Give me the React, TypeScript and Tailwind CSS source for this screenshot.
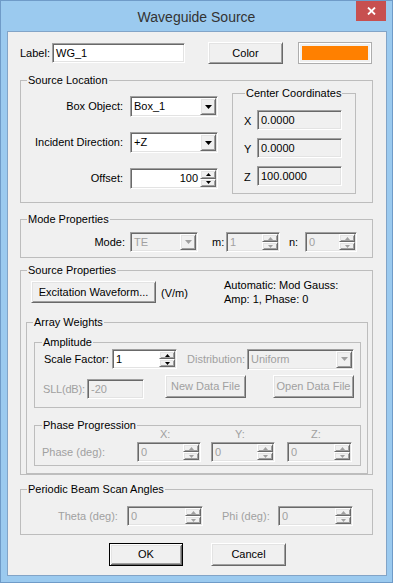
import type { ReactNode } from 'react'

const sunken =
  'border border-t-[#a0a0a0] border-l-[#a0a0a0] border-r-white border-b-white shadow-[inset_1px_1px_0_#696969,inset_-1px_-1px_0_#e3e3e3]'
const raised =
  'border border-t-white border-l-white border-r-[#696969] border-b-[#696969] shadow-[inset_1px_1px_0_#e3e3e3,inset_-1px_-1px_0_#a0a0a0] bg-[#f0f0f0]'

export default function App() {
  return (
    <div className="w-[393px] h-[583px] bg-[#9bcaef] border border-[#6f9bc8] font-['Liberation_Sans',Arial,sans-serif] text-[11px] text-black">
      {/* Title bar */}
      <div className="flex h-[30px]">
        <div className="flex-1" />
        <div className="self-center text-[14px] leading-[16px] text-[#333] mt-[1px]">Waveguide Source</div>
        <div className="flex-1 flex justify-end">
          <div className="w-[30px] h-[20px] mr-[6px] bg-[#c75050] flex items-center justify-center">
            <svg width="9" height="8" viewBox="0 0 9 8">
              <path d="M1 0.5l7 7M8 0.5l-7 7" stroke="#fff" strokeWidth="1.8" />
            </svg>
          </div>
        </div>
      </div>

      {/* Client area */}
      <div className="ml-[6px] w-[380px] h-[545px] border border-[#82a4c7] bg-[#f0f0f0]">
        {/* Label row */}
        <div className="flex items-center mt-[10px] h-[22px]">
          <span className="ml-[12px] w-[32px] leading-[13px]">Label:</span>
          <Edit className="w-[133px] h-[20px]" value="WG_1" />
          <Button className="ml-[23px] w-[75px] h-[22px]">Color</Button>
          <div className="ml-[15px] w-[74px] h-[22px] border border-[#adadad] shadow-[inset_1px_1px_0_#fff,inset_-1px_-1px_0_#fff] p-[3px]">
            <div className="h-full bg-[#ff8000]" />
          </div>
        </div>

        {/* Source Location */}
        <Group title="Source Location" className="ml-[12px] mt-[10px] w-[353px] h-[129px]" legendClass="ml-[6px]">
          <div className="flex">
            <div className="w-[197px]">
              <Row className="mt-[9px]" label="Box Object:">
                <Combo className="w-[88px] h-[21px]" value="Box_1" />
              </Row>
              <Row className="mt-[15px]" label="Incident Direction:">
                <Combo className="w-[88px] h-[21px]" value="+Z" />
              </Row>
              <Row className="mt-[15px]" label="Offset:">
                <Spin className="w-[88px] h-[21px]" value="100" right />
              </Row>
            </div>
            <Group title="Center Coordinates" className="ml-[14px] w-[124px] h-[107px]" legendClass="ml-[12px]">
              <Coord className="mt-[10px]" axis="X" value="0.0000" />
              <Coord className="mt-[8px]" axis="Y" value="0.0000" />
              <Coord className="mt-[8px]" axis="Z" value="100.0000" />
            </Group>
          </div>
        </Group>

        {/* Mode Properties */}
        <Group title="Mode Properties" className="ml-[12px] mt-[10px] w-[353px] h-[45px]" legendClass="ml-[6px]">
          <div className="flex items-center mt-[6px] h-[20px]">
            <span className="w-[104px] text-right leading-[13px]">Mode:</span>
            <Combo className="ml-[5px] w-[68px] h-[20px]" value="TE" disabled />
            <span className="ml-[14px] w-[14px] leading-[13px]">m:</span>
            <Spin className="w-[54px] h-[20px]" value="1" disabled />
            <span className="ml-[9px] w-[16px] leading-[13px]">n:</span>
            <Spin className="w-[52px] h-[20px]" value="0" disabled />
          </div>
        </Group>

        {/* Source Properties */}
        <Group title="Source Properties" className="ml-[12px] mt-[6px] w-[353px] h-[211px]" legendClass="ml-[6px]">
          <div className="flex items-start mt-[4px]">
            <Button className="ml-[10px] w-[125px] h-[22px]">Excitation Waveform...</Button>
            <span className="ml-[5px] w-[63px] self-center leading-[13px]">(V/m)</span>
            <div className="-mt-[3px] leading-[14px]">
              <div>Automatic: Mod Gauss:</div>
              <div>Amp: 1, Phase: 0</div>
            </div>
          </div>

          <Group title="Array Weights" className="ml-[5px] mt-[10px] w-[342px] h-[158px]" legendClass="ml-[6px]">
            <Group title="Amplitude" className="ml-[7px] mt-[7px] w-[327px] h-[72px]" legendClass="ml-[7px]">
              <div className="flex items-center h-[20px]">
                <span className="ml-[9px] w-[68px] leading-[13px]">Scale Factor:</span>
                <Spin className="w-[65px] h-[20px]" value="1" />
                <span className="ml-[10px] w-[60px] leading-[13px] text-[#a0a0a0]">Distribution:</span>
                <Combo className="w-[107px] h-[21px]" value="Uniform" disabled />
              </div>
              <div className="flex items-start mt-[6px] h-[23px]">
                <div className="flex items-center mt-[4px]">
                  <span className="ml-[8px] w-[44px] leading-[13px] text-[#a0a0a0] tracking-[-0.2px]">SLL(dB):</span>
                  <Edit className="w-[57px] h-[20px]" value="-20" disabled />
                </div>
                <Button className="ml-[21px] w-[81px] h-[23px]" disabled>New Data File</Button>
                <Button className="ml-[27px] w-[81px] h-[23px]" disabled>Open Data File</Button>
              </div>
            </Group>

            <Group title="Phase Progression" className="ml-[7px] mt-[11px] w-[327px] h-[47px]" legendClass="ml-[7px]">
              <div className="flex -mt-[4px] h-[12px] leading-[12px] text-[#a0a0a0]">
                <span className="ml-[125px] w-[75px]">X:</span>
                <span className="w-[76px]">Y:</span>
                <span>Z:</span>
              </div>
              <div className="flex items-center mt-[2px] h-[20px]">
                <span className="ml-[7px] w-[95px] leading-[13px] text-[#a0a0a0]">Phase (deg):</span>
                <Spin className="w-[64px] h-[20px]" value="0" disabled />
                <Spin className="ml-[10px] w-[64px] h-[20px]" value="0" disabled />
                <Spin className="ml-[12px] w-[65px] h-[20px]" value="0" disabled />
              </div>
            </Group>
          </Group>
        </Group>

        {/* Periodic Beam Scan Angles */}
        <Group title="Periodic Beam Scan Angles" className="ml-[12px] mt-[8px] w-[353px] h-[52px]" legendClass="ml-[6px]">
          <div className="flex items-center mt-[10px] h-[20px]">
            <span className="ml-[37px] w-[69px] leading-[13px] text-[#a0a0a0]">Theta (deg):</span>
            <Spin className="w-[76px] h-[20px]" value="0" disabled />
            <span className="ml-[19px] w-[56px] leading-[13px] text-[#a0a0a0]">Phi (deg):</span>
            <Spin className="w-[75px] h-[20px]" value="0" disabled />
          </div>
        </Group>

        {/* OK / Cancel */}
        <div className="flex mt-[8px]">
          <div className="ml-[101px] w-[74px] h-[23px] border border-black bg-[#f0f0f0] shadow-[inset_1px_1px_0_#fff,inset_-1px_-1px_0_#696969,inset_2px_2px_0_#e3e3e3,inset_-2px_-2px_0_#a0a0a0] flex items-center justify-center leading-[13px]">
            OK
          </div>
          <Button className="ml-[28px] w-[75px] h-[23px]">Cancel</Button>
        </div>
      </div>
    </div>
  )
}

function Group({ title, className, legendClass, children }: { title: string; className: string; legendClass: string; children?: ReactNode }) {
  return (
    <fieldset className={`border border-[#bdbdbd] ${className}`}>
      <legend className={`px-[1px] leading-[13px] ${legendClass}`}>{title}</legend>
      {children}
    </fieldset>
  )
}

function Row({ label, className, children }: { label: string; className: string; children: ReactNode }) {
  return (
    <div className={`flex items-center h-[21px] ${className}`}>
      <span className="w-[102px] text-right leading-[13px]">{label}</span>
      <div className="ml-[7px]">{children}</div>
    </div>
  )
}

function Coord({ axis, value, className }: { axis: string; value: string; className: string }) {
  return (
    <div className={`flex items-center h-[20px] ${className}`}>
      <span className="ml-[11px] w-[13px] leading-[13px] mt-[3px]">{axis}</span>
      <Edit className="w-[85px] h-[20px]" value={value} readOnly />
    </div>
  )
}

function Button({ className, disabled, children }: { className: string; disabled?: boolean; children: ReactNode }) {
  return (
    <div className={`flex items-center justify-center leading-[13px] ${raised} ${disabled ? 'text-[#a0a0a0]' : ''} ${className}`}>
      {children}
    </div>
  )
}

function Edit({ className, value, right, disabled, readOnly }: { className: string; value: string; right?: boolean; disabled?: boolean; readOnly?: boolean }) {
  return (
    <div className={`flex items-center ${sunken} ${disabled || readOnly ? 'bg-[#f0f0f0]' : 'bg-white'} ${className}`}>
      <span className={`flex-1 px-[3px] leading-[13px] ${right ? 'text-right' : ''} ${disabled ? 'text-[#a0a0a0]' : ''}`}>{value}</span>
    </div>
  )
}

function Combo({ className, value, disabled }: { className: string; value: string; disabled?: boolean }) {
  return (
    <div className={`flex p-[1px] ${sunken} ${disabled ? 'bg-[#f0f0f0]' : 'bg-white'} ${className}`}>
      <span className={`flex-1 self-center pl-[2px] leading-[13px] ${disabled ? 'text-[#a0a0a0]' : ''}`}>{value}</span>
      <div className={`w-[16px] flex items-center justify-center ${raised}`}>
        <svg width="7" height="4" viewBox="0 0 7 4">
          <path d="M0 0h7L3.5 4z" fill={disabled ? '#a0a0a0' : '#000'} />
        </svg>
      </div>
    </div>
  )
}

function Spin({ className, value, right, disabled }: { className: string; value: string; right?: boolean; disabled?: boolean }) {
  const c = disabled ? '#a0a0a0' : '#000'
  return (
    <div className={`flex p-[1px] ${sunken} ${disabled ? 'bg-[#f0f0f0]' : 'bg-white'} ${className}`}>
      <span className={`flex-1 self-center px-[2px] leading-[13px] ${right ? 'text-right' : ''} ${disabled ? 'text-[#a0a0a0]' : ''}`}>{value}</span>
      <div className="w-[16px] flex flex-col">
        <div className={`flex-1 flex items-center justify-center ${raised}`}>
          <svg width="5" height="3" viewBox="0 0 5 3">
            <path d="M0 3h5L2.5 0z" fill={c} />
          </svg>
        </div>
        <div className={`flex-1 flex items-center justify-center ${raised}`}>
          <svg width="5" height="3" viewBox="0 0 5 3">
            <path d="M0 0h5L2.5 3z" fill={c} />
          </svg>
        </div>
      </div>
    </div>
  )
}
